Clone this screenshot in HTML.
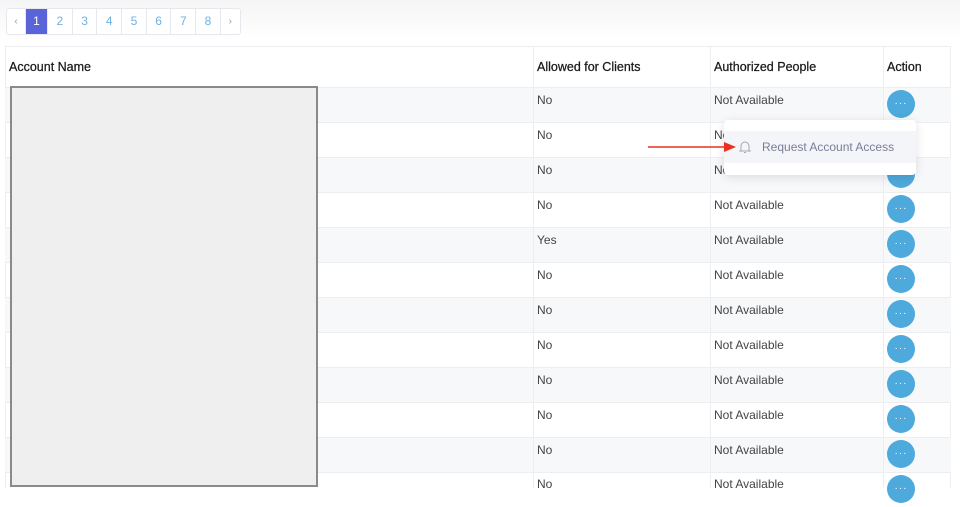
<!DOCTYPE html>
<html><head><meta charset="utf-8"><style>
*{margin:0;padding:0;box-sizing:border-box}
body{width:960px;height:488px;overflow:hidden;background:#fff;font-family:"Liberation Sans",sans-serif;position:relative;color:#3a3a3a}
.top{position:absolute;left:0;top:0;width:960px;height:40px;background:linear-gradient(#f5f5f6,#fff)}
.pg{position:absolute;top:8px;left:6px;display:flex;border:1px solid #e6e8ee;border-radius:3px;background:#fff;height:27px}
.pg div{width:24.7px;height:25px;line-height:25px;text-align:center;font-size:12px;color:#6fb1e0;border-right:1px solid #e6e8ee}
.pg div:first-child{width:19px;color:#999;font-size:10px}
.pg div:last-child{width:19px;border-right:none;color:#999;font-size:10px}
.pg .a{background:#5964d8;color:#fff;width:22px}
.row{position:absolute;left:5px;width:946px;height:35px;border-top:1px solid #eceef2}
.row.g{background:#f7f8fa}
.vl{position:absolute;top:47px;height:441px;width:1px;background:#eceef2}
.t{position:absolute;font-size:12px;color:#444}
.h{color:#1a1a1a;font-size:12.5px;-webkit-text-stroke:0.25px #1a1a1a}
.btn{position:absolute;left:887px;width:28px;height:28px;border-radius:50%;background:#4ea9dc;color:#fff;font-size:10px;text-align:center;line-height:28px;letter-spacing:1px}
.box{position:absolute;left:10px;top:86px;width:308px;height:401px;background:#efefef;border:2px solid #8a8a8a}
.pop{position:absolute;left:724px;top:120px;width:192px;height:55px;background:#fff;border-radius:4px;box-shadow:0 2px 10px rgba(0,0,0,.12)}
.pop .it{position:absolute;left:0;top:11px;width:192px;height:32px;background:#f4f5f8}
.pop span{position:absolute;left:38px;top:9px;font-size:12px;color:#7a7d99}
</style></head><body>
<div class="top"></div>
<div class="pg"><div>‹</div><div class="a">1</div><div>2</div><div>3</div><div>4</div><div>5</div><div>6</div><div>7</div><div>8</div><div>›</div></div>
<div style="position:absolute;left:5px;top:46px;width:946px;height:442px;border:1px solid #eceef2;border-bottom:none"></div>
<div class="row g" style="top:87px"></div>
<div class="row" style="top:122px"></div>
<div class="row g" style="top:157px"></div>
<div class="row" style="top:192px"></div>
<div class="row g" style="top:227px"></div>
<div class="row" style="top:262px"></div>
<div class="row g" style="top:297px"></div>
<div class="row" style="top:332px"></div>
<div class="row g" style="top:367px"></div>
<div class="row" style="top:402px"></div>
<div class="row g" style="top:437px"></div>
<div class="row" style="top:472px"></div>
<div class="vl" style="left:533px"></div><div class="vl" style="left:710px"></div><div class="vl" style="left:883px"></div>
<div class="t h" style="left:9px;top:60px">Account Name</div>
<div class="t h" style="left:537px;top:60px">Allowed for Clients</div>
<div class="t h" style="left:714px;top:60px">Authorized People</div>
<div class="t h" style="left:887px;top:60px">Action</div>

<div class="t" style="left:537px;top:93px">No</div><div class="t" style="left:714px;top:93px">Not Available</div>
<div class="t" style="left:537px;top:128px">No</div><div class="t" style="left:714px;top:128px">No</div>
<div class="t" style="left:537px;top:163px">No</div><div class="t" style="left:714px;top:163px">No</div>
<div class="t" style="left:537px;top:198px">No</div><div class="t" style="left:714px;top:198px">Not Available</div>
<div class="t" style="left:537px;top:233px">Yes</div><div class="t" style="left:714px;top:233px">Not Available</div>
<div class="t" style="left:537px;top:268px">No</div><div class="t" style="left:714px;top:268px">Not Available</div>
<div class="t" style="left:537px;top:303px">No</div><div class="t" style="left:714px;top:303px">Not Available</div>
<div class="t" style="left:537px;top:338px">No</div><div class="t" style="left:714px;top:338px">Not Available</div>
<div class="t" style="left:537px;top:373px">No</div><div class="t" style="left:714px;top:373px">Not Available</div>
<div class="t" style="left:537px;top:408px">No</div><div class="t" style="left:714px;top:408px">Not Available</div>
<div class="t" style="left:537px;top:443px">No</div><div class="t" style="left:714px;top:443px">Not Available</div>
<div class="t" style="left:537px;top:477px">No</div><div class="t" style="left:714px;top:477px">Not Available</div>

<div class="btn" style="top:90px">···</div>
<div class="btn" style="top:160px">···</div>
<div class="btn" style="top:195px">···</div>
<div class="btn" style="top:230px">···</div>
<div class="btn" style="top:265px">···</div>
<div class="btn" style="top:300px">···</div>
<div class="btn" style="top:335px">···</div>
<div class="btn" style="top:370px">···</div>
<div class="btn" style="top:405px">···</div>
<div class="btn" style="top:440px">···</div>
<div class="btn" style="top:475px">···</div>

<div class="box"></div>

<div class="pop"><div class="it">
<svg style="position:absolute;left:15px;top:9px" width="12" height="14" viewBox="0 0 12 14"><path d="M2 10V6a4 4 0 0 1 8 0v4l1 1H1z M5 12.5h2" fill="none" stroke="#a3a6b8" stroke-width="1"/></svg>
<span>Request Account Access</span></div></div>

<svg style="position:absolute;left:646px;top:141px" width="92" height="12"><line x1="2" y1="6" x2="80" y2="6" stroke="#e8321e" stroke-width="1.6"/><path d="M78 1 L90 6 L78 11z" fill="#e8321e"/></svg>
</body></html>
